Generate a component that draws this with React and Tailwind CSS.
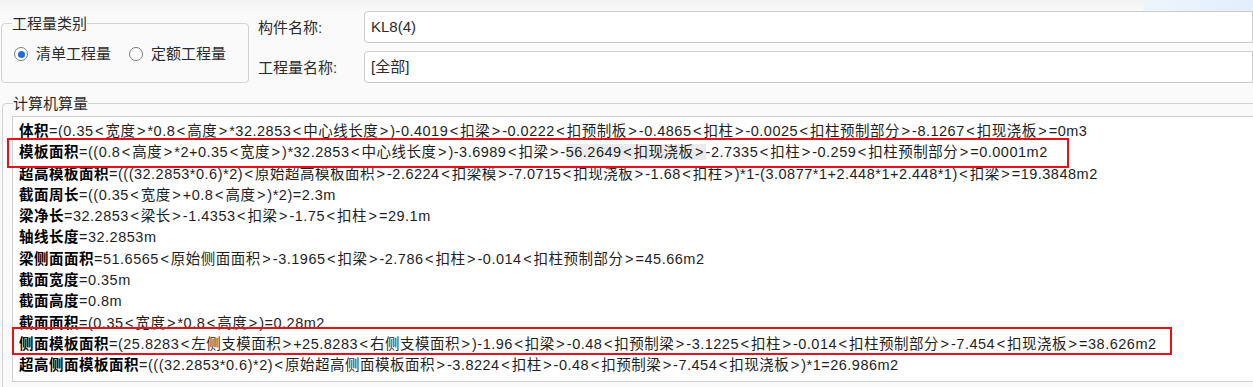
import React from "react";

const FONT = { fontFamily: "'Liberation Sans','Noto Sans CJK SC',sans-serif" };

const lines = [
  ["体积", "=(0.35<宽度>*0.8<高度>*32.2853<中心线长度>)-0.4019<扣梁>-0.0222<扣预制板>-0.4865<扣柱>-0.0025<扣柱预制部分>-8.1267<扣现浇板>=0m3"],
  ["模板面积", "=((0.8<高度>*2+0.35<宽度>)*32.2853<中心线长度>)-3.6989<扣梁>-", "56.2649<扣现浇板>", "-2.7335<扣柱>-0.259<扣柱预制部分>=0.0001m2"],
  ["超高模板面积", "=(((32.2853*0.6)*2)<原始超高模板面积>-2.6224<扣梁模>-7.0715<扣现浇板>-1.68<扣柱>)*1-(3.0877*1+2.448*1+2.448*1)<扣梁>=19.3848m2"],
  ["截面周长", "=((0.35<宽度>+0.8<高度>)*2)=2.3m"],
  ["梁净长", "=32.2853<梁长>-1.4353<扣梁>-1.75<扣柱>=29.1m"],
  ["轴线长度", "=32.2853m"],
  ["梁侧面面积", "=51.6565<原始侧面面积>-3.1965<扣梁>-2.786<扣柱>-0.014<扣柱预制部分>=45.66m2"],
  ["截面宽度", "=0.35m"],
  ["截面高度", "=0.8m"],
  ["截面面积", "=(0.35<宽度>*0.8<高度>)=0.28m2"],
  ["侧面模板面积", "=(25.8283<左侧支模面积>+25.8283<右侧支模面积>)-1.96<扣梁>-0.48<扣预制梁>-3.1225<扣柱>-0.014<扣柱预制部分>-7.454<扣现浇板>=38.626m2"],
  ["超高侧面模板面积", "=(((32.2853*0.6)*2)<原始超高侧面模板面积>-3.8224<扣柱>-0.48<扣预制梁>-7.454<扣现浇板>)*1=26.986m2"],
];

// brackets get a bit of air like the original font
const Expr = ({ text }) =>
  text.split(/([<>])/).map((p, i) =>
    p === "<" || p === ">" ? (
      <span key={i} className="mx-[1.5px]">{p}</span>
    ) : (
      <span key={i}>{p}</span>
    )
  );

const Radio = ({ checked, label }) => (
  <label className="flex items-center">
    <span className="w-[14px] h-[14px] rounded-full border border-[#7a7a7a] bg-white flex items-center justify-center">
      {checked && <span className="w-[7px] h-[7px] rounded-full bg-[#1c6fd9]" />}
    </span>
    <span className="ml-[8px]">{label}</span>
  </label>
);

const Field = ({ label, value }) => (
  <div className="flex items-center h-[32px]">
    <span className="w-[107px] pl-[1px] pt-[3px]">{label}</span>
    <div className="flex-1 h-[32px] flex items-center border border-[#cdcdcd] rounded-l-[4px] bg-white pl-[6px] text-[15px]">
      {value}
    </div>
  </div>
);

export default function App() {
  return (
    <div className="relative w-[1253px] h-[387px] overflow-hidden bg-[#fafafa] text-[#2a2a2a] text-[15px]" style={FONT}>
      {/* blurred strip at the top */}
      <div className="h-[11px] flex">
        <div className="flex-1 bg-gradient-to-b from-[#f2f2f2] to-[#fafafa]" />
        <div className="w-[110px] bg-gradient-to-r from-[#eef5fc] to-[#e2eefa]" />
      </div>

      <div className="flex h-[72px]">
        <fieldset className="ml-[1px] mt-[5px] w-[248px] h-[67px] border border-[#d2d2d2] rounded-[4px]">
          <legend className="ml-[10px] leading-[15px]">工程量类别</legend>
          <div className="flex items-center gap-[18px] pl-[12px] pt-[12px]">
            <Radio checked label="清单工程量" />
            <Radio label="定额工程量" />
          </div>
        </fieldset>
        <div className="flex-1 ml-[8px] flex flex-col gap-[8px]">
          <Field label="构件名称:" value="KL8(4)" />
          <Field label="工程量名称:" value="[全部]" />
        </div>
      </div>

      <fieldset className="ml-[2px] mt-[13px] w-[1300px] h-[320px] border border-[#d2d2d2] rounded-[4px]">
        <legend className="ml-[10px] leading-[15px]">计算机算量</legend>
        <div className="ml-[9px] mt-[5px] h-[266px] border border-[#d0d0d0] bg-white pl-[6px] pt-[4px] text-[14.5px] text-[#1e1e1e] tracking-[0.5px] leading-[21.3px]">
          {lines.map(([label, a, hl, b]) => (
            <div key={label} className="whitespace-nowrap">
              <span className="font-bold text-black">{label}</span>
              <Expr text={a} />
              {hl && (
                <span className="bg-[#ebebeb]">
                  <Expr text={hl} />
                </span>
              )}
              {b && <Expr text={b} />}
            </div>
          ))}
        </div>
      </fieldset>

      {/* red annotation boxes */}
      <div className="absolute left-[7px] top-[138px] w-[1062px] h-[30px] border-2 border-[#e8101a]" />
      <div className="absolute left-[12px] top-[327px] w-[1160px] h-[28px] border-2 border-[#e8101a]" />
    </div>
  );
}
